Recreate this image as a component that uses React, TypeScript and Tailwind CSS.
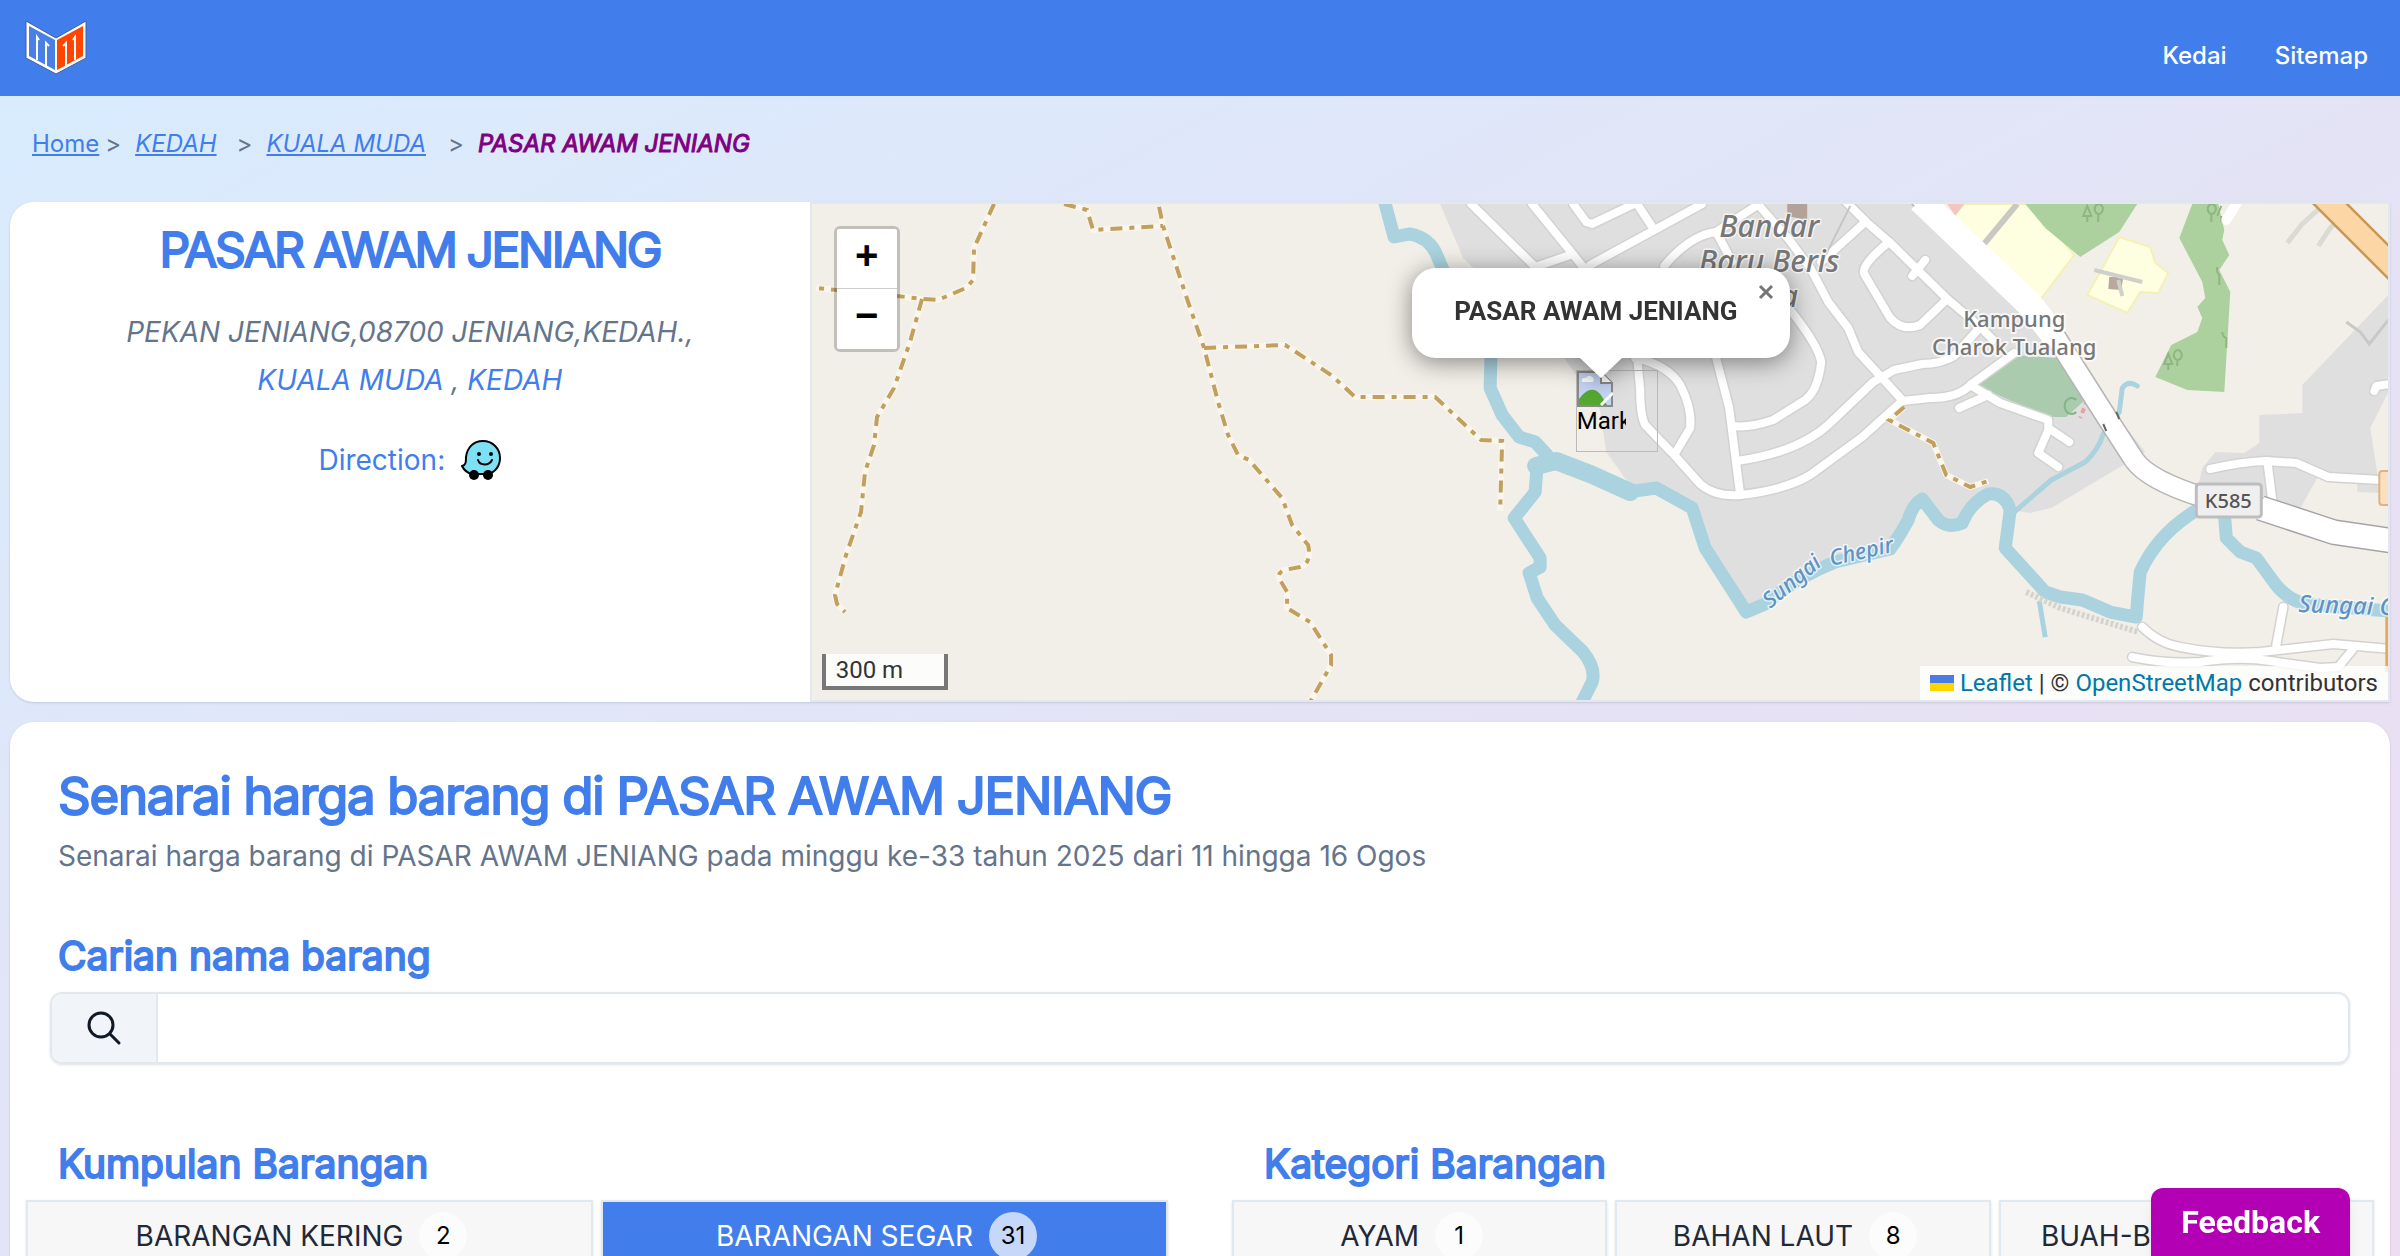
import { useState } from 'react';

const trails = [
  'M994 204 974 248 973 280 966 288 938 300 922 299 897 296 816 288',
  'M922 299 910 342 894 388 877 417 874 445 865 472 861 512 846 555 835 595 837 604 845 612',
  'M1064 204 1087 210 1093 230 1163 226',
  'M1159 207 1163 226 1188 302 1204 348 1218 402 1228 435 1238 455 1249 460 1282 498 1292 525 1308 545Q1312 563 1300 567L1284 570Q1276 574 1280 580L1287 592 1287 608 1310 622 1331 655 1331 665 1310 702',
  'M1204 348 1285 345 1331 375 1355 397 1435 397 1481 440 1502 441 1500 511',
  'M1904 407 1889 420 1933 443 1946 475 1970 487 1988 481',
];

const streets = [
  'M1471 204 1535 267 1570 255',
  'M1532 204 1583 267',
  'M1573 204 1586 222 1592 224 1634 204',
  'M1637 204 1654 230',
  'M1702 204 1590 265',
  'M1664 266Q1690 235 1716 232L1756 206',
  'M1760 207 1789 240 1810 268 1828 302 1848 328 1858 352 1902 400',
  'M1716 232 1732 262',
  'M1844 200 1866 222 1889 242 1946 298 1980 327 1993 340',
  'M1865 222 1821 262',
  'M1889 242Q1860 265 1864 274L1890 318Q1902 332 1920 325L1946 300',
  'M1912 276 1925 260',
  'M1980 327 1954 356Q1940 364 1922 364L1894 370 1873 382 1831 422Q1800 452 1737 461',
  'M2014 353 1970 385Q1958 398 1930 398L1902 401 1862 437 1810 475Q1785 490 1740 495 1715 497 1700 484L1674 455 1645 425Q1640 415 1640 390L1637 358',
  'M1635 358Q1668 365 1680 385 1692 408 1690 428L1674 455',
  'M1716 358 1729 408 1740 495',
  'M1790 310Q1818 345 1821 362 1818 390 1805 400L1773 420Q1750 428 1732 426',
  'M1970 385 2000 403 2048 420 2048 430 2038 453 2058 467',
  'M1988 395 1959 408',
  'M2051 430 2069 442',
  'M2210 469Q2240 462 2265 461L2296 463 2328 477 2380 480',
  'M2267 461 2273 508',
  'M2390 384 2376 386 2374 391',
  'M2142 627Q2158 643 2180 647 2220 655 2260 652L2333 644 2390 649',
  'M2283 607 2276 645',
  'M2132 657Q2165 664 2200 662 2240 656 2270 661L2320 668 2338 667 2352 650',
];

const rivers = [
  'M1384 200 1394 237 1410 234Q1430 238 1437 256L1460 310 1491 350 1490 388 1502 415 1519 437 1535 442 1547 455 1540 465',
  'M1537 465 1535 492 1514 518 1540 558 1540 567 1529 573 1537 598 1555 625 1583 652Q1596 668 1592 682L1581 704',
  'M1627 492 1656 488 1692 508 1705 548 1746 612 1765 604Q1795 578 1835 562L1890 549Q1900 535 1908 520 1912 505 1922 499L1938 520Q1948 529 1962 523 1970 503 1988 494 2004 492 2010 510L2005 548 2045 592 2060 597 2082 600 2110 612 2136 617Q2138 590 2140 572 2158 532 2200 508',
  'M2224 512 2226 538 2240 552 2256 558 2275 584Q2288 600 2305 604L2400 612',
];

const mainRoad = 'M1912 190 2030 305 2056 338 2103 412 2134 460Q2148 480 2202 497L2260 508 2333 532 2400 542';

function MapTiles() {
  return (
    <svg
      className="absolute inset-0 h-full w-full"
      viewBox="812 204 1576 496"
      preserveAspectRatio="xMidYMid slice"
      aria-hidden="true"
    >
      <rect x="800" y="190" width="1600" height="520" fill="#f2efe9" />

      {/* residential areas */}
      <g fill="#dfdfdf">
        <path d="M1440 204 1463 258 1560 352 1600 410 1606 452 1632 488 1656 488 1692 508 1705 548 1746 612 1835 562 1899 548 1922 500 1949 525 1988 495 2010 510 2030 513 2051 508 2145 452 2030 305 1920 204Z" />
        <path d="M2388 295 2302 385 2302 413 2259 415 2259 443 2244 453 2215 452 2202 468 2198 485 2299 510 2317 478 2357 480 2357 492 2380 493 2370 428 2388 392Z" />
      </g>

      {/* schools, parks and woods */}
      <g fill="#fefee0" stroke="#f5f0b8" strokeWidth="2">
        <path d="M1964 204 2030 204 2074 255 2040 300 1980 242 1949 220Z" />
        <path d="M2119 237 2150 247 2155 263 2168 273 2158 293 2140 292 2127 313 2087 295 2100 272Z" />
      </g>
      <path d="M1947 204 1964 204 1955 216Z" fill="#f5c5bf" />
      <path d="M2017 204 1983 245" stroke="#c9c9c3" strokeWidth="6" />
      <g fill="#add19e">
        <path d="M2025 204 2137 204 2119 232 2080 257 2045 228Z" />
        <path d="M2192 204 2218 204 2224 230 2222 240 2229 255 2219 270 2230 292 2224 392 2187 390 2155 377 2171 345 2197 332 2202 318 2197 307 2205 298 2202 282 2179 238Z" />
      </g>
      <path d="M2011 355 2056 358 2087 398 2066 417 2048 417 1975 385Z" fill="#aacbae" />
      <g fill="none" stroke="#8fb580" strokeWidth="2">
        <path d="M2087 222v-6M2083 216l4-10 4 10zM2098 222v-8a4 5 0 1 1 1 0" />
        <path d="M2211 222v-8a4 5 0 1 1 1 0M2221 222v-6M2217 216l4-10" />
        <path d="M2168 370v-6M2164 364l4-10 4 10zM2177 366v-6a4 5 0 1 1 1 0" />
        <path d="M2226 348v-10a5 7 0 0 1-4-6M2219 285v-10a5 7 0 0 1-2-8" />
        <path d="M2076 400a7 8 0 1 0 0 12" stroke="#85b388" />
      </g>
      <path d="M1787 204h20v16l-20-4z" fill="#b3a297" />
      <path d="M2109 277h14l-2 13-13-1z" fill="#b9a99c" />
      <path d="M2094 270 2142 282M2118 280 2122 296" stroke="#cfcfcb" strokeWidth="4" />
      <path d="M2287 243 2302 224 2322 206M2318 246 2330 228 2348 212" fill="none" stroke="#dcdad5" strokeWidth="5" />
      <path d="M2346 322 2360 332 2369 344 2388 320" fill="none" stroke="#c9c9c9" strokeWidth="3" />
      <path d="M2236 204 2226 220" stroke="#fff" strokeWidth="10" strokeLinecap="round" />

      <g fill="none" stroke="#aad3df" strokeLinejoin="round">
        {rivers.map((d) => (
          <path key={d} d={d} strokeWidth="13" />
        ))}
        <path d="M1536 466 1556 461 1590 474 1630 492" strokeWidth="18" strokeLinecap="round" />
        <path d="M2137 386Q2128 380 2122 388L2119 412 2103 434Q2098 450 2085 462L2051 480 2014 512" strokeWidth="5" strokeLinecap="round" />
        <path d="M2039 601 2045 637" strokeWidth="5" />
      </g>

      <g fill="none" strokeLinecap="round" strokeLinejoin="round">
        {streets.map((d) => (
          <path key={d} d={d} stroke="#d2d2d0" strokeWidth="11" />
        ))}
        {streets.map((d) => (
          <path key={d} d={d} stroke="#fff" strokeWidth="8" />
        ))}
      </g>
      <path d="M1842 222 1822 262M1842 222 1850 206" stroke="#c6c6c6" strokeWidth="2" />
      <path d="M2026 592 2060 608 2138 632" fill="none" stroke="#d6d3cd" strokeWidth="6" strokeDasharray="3 2" />
      <path d="M2087 400 2080 418" stroke="#eaa09b" strokeWidth="4" strokeDasharray="5 4" />

      {/* main roads */}
      <g fill="none" strokeLinejoin="round">
        <path d={mainRoad} stroke="#b5b5b5" strokeWidth="22" />
        <path d="M2260 508 2333 532 2400 542" stroke="#a5a5a5" strokeWidth="26" />
        <path d="M1920 200 2030 305 2056 338" stroke="#fff" strokeWidth="26" />
        <path d={mainRoad} stroke="#fff" strokeWidth="19" />
        <path d="M2260 508 2333 532 2400 542" stroke="#fff" strokeWidth="23" />
        <path d="M2310 184 2400 274" stroke="#c9974f" strokeWidth="26" />
        <path d="M2310 184 2400 274" stroke="#fcd6a4" strokeWidth="21" />
        <path d="M2387 612V672" stroke="#e8a852" strokeWidth="4" />
      </g>
      <path d="M2116 412 2119 419M2103 424 2106 431" stroke="#666" strokeWidth="2" />

      <g fill="none">
        {trails.map((d) => (
          <path key={d} d={d} stroke="#faf6ee" strokeWidth="6" />
        ))}
        {trails.map((d) => (
          <path key={d} d={d} stroke="#c0a05c" strokeWidth="4" strokeDasharray="12 7 5 7" />
        ))}
      </g>

      <rect x="2379" y="471" width="20" height="34" rx="3" fill="#fbe0c0" stroke="#dfb183" strokeWidth="2" />
      <rect x="2196" y="484" width="65" height="33" rx="3" fill="#efefef" stroke="#bdbdbd" strokeWidth="3" />
      <g className="font-['Noto_Sans',sans-serif]" textAnchor="middle" paintOrder="stroke" stroke="#ffffff" strokeOpacity="0.7" strokeLinejoin="round">
        <text x="2228" y="508" fontSize="20" fontWeight="500" fill="#555" stroke="none">K585</text>
        <g fontSize="30" fontStyle="italic" fontWeight="500" fill="#777" strokeWidth="3">
          <text x="1769" y="237">Bandar</text>
          <text x="1769" y="272">Baru Beris</text>
          <text x="1769" y="307">Jaya</text>
        </g>
        <g fontSize="22" fontWeight="500" fill="#777" strokeWidth="4">
          <text x="2014" y="327">Kampung</text>
          <text x="2014" y="355">Charok Tualang</text>
        </g>
        <g fontSize="22" fontStyle="italic" fontWeight="500" fill="#5f93c4" strokeWidth="3" textAnchor="start">
          <text transform="translate(1770 609) rotate(-40)">Sungai</text>
          <text transform="translate(1831 566) rotate(-13)">Chepir</text>
          <text transform="translate(2298 612) rotate(2)" fontSize="24">Sungai C</text>
        </g>
      </g>
    </svg>
  );
}

function Logo() {
  return (
    <svg className="h-14 w-16" viewBox="0 0 64 56" aria-hidden="true">
      <path d="M2 1 32 18 62 1V38L32 54 2 38Z" fill="#fff" stroke="#3f5f9f" strokeWidth="1" />
      <path d="M5 6 31 20V50L5 36Z" fill="#4a80e6" />
      <path d="M59 6 33 20V50L59 36Z" fill="#ff4500" />
      <path d="M13 40V17L15 20M22 46V23L25 26" fill="none" stroke="#fff" strokeWidth="2" />
      <path d="M51 40V17L49 20M42 46V23L39 26" fill="none" stroke="#fff" strokeWidth="2" />
    </svg>
  );
}

function WazeIcon() {
  return (
    <svg className="h-10 w-10" viewBox="0 0 40 40" aria-hidden="true">
      <path
        d="M22 1C12 1 6 8 5 17C5 22 5 25 1 26C3 30 6 33 11 34H26C34 33 39 26 39 18C39 8 31 1 22 1Z"
        fill="#7ee0f5"
        stroke="#000"
        strokeWidth="2"
        strokeLinejoin="round"
      />
      <circle cx="13" cy="35" r="5" />
      <circle cx="27" cy="35" r="5" />
      <circle cx="18" cy="14" r="2" />
      <circle cx="30" cy="14" r="2" />
      <path d="M17 20C19 26 28 26 31 20" fill="none" stroke="#000" strokeWidth="2" strokeLinecap="round" />
    </svg>
  );
}

function SearchIcon() {
  return (
    <svg className="h-9 w-9" viewBox="0 0 36 36" fill="none" stroke="#111827" strokeWidth="3" strokeLinecap="round" aria-hidden="true">
      <circle cx="15" cy="15" r="12" />
      <path d="M24 24 33 33" />
    </svg>
  );
}

function StoreMap() {
  return (
    <div className="relative flex-1 overflow-hidden border-2 border-[#e2e8f0] font-[Roboto,sans-serif]">
      <MapTiles />

      <div className="absolute top-5.5 left-5.5 flex w-[66px] flex-col rounded-md border-3 border-black/20 bg-clip-padding font-['Liberation_Mono',monospace] text-[40px] font-bold text-black">
        <button type="button" aria-label="Zoom in" className="h-15 rounded-t-xs border-b border-[#ccc] bg-white">+</button>
        <button type="button" aria-label="Zoom out" className="h-15 rounded-b-xs bg-white">−</button>
      </div>

      <div className="absolute top-[166px] left-1/2 -ml-6 h-[82px] w-[82px] border border-[#bababa]">
        <svg className="block h-9 w-9" viewBox="0 0 36 36" aria-hidden="true">
          <path d="M1 1H24L35 12V35H1Z" fill="#c6d5f5" stroke="#8a8a8a" strokeWidth="2" />
          <path d="M5 11a3 3 0 0 1 4-4 4 4 0 0 1 7 4z" fill="#fff" />
          <path d="M2 34V28Q14 12 24 24L30 34Z" fill="#55a832" />
          <path d="M24 1V12H35" fill="#fff" stroke="#8a8a8a" strokeWidth="2" />
          <path d="M36 22 24 34" stroke="#fff" strokeWidth="3" />
        </svg>
        <span className="block w-[49px] overflow-hidden text-2xl leading-7 text-black">Marker</span>
      </div>

      <div className="absolute top-16 left-1/2 -ml-[188px] w-[378px] drop-shadow-[0_4px_12px_rgba(0,0,0,0.45)]">
        <div className="rounded-3xl bg-white pt-6.5 pr-2.5 pb-7.5 text-center text-[26px] leading-[34px] font-bold text-[#333]">
          PASAR AWAM JENIANG
        </div>
        <svg className="mx-auto block h-5 w-11" viewBox="0 0 44 20" aria-hidden="true">
          <path d="M1 0H43L22 20Z" fill="#fff" />
        </svg>
        <button type="button" aria-label="Close popup" className="absolute top-0 right-0 flex h-12 w-12 items-center justify-center">
          <svg className="h-4 w-4" viewBox="0 0 16 16" stroke="#757575" strokeWidth="3" aria-hidden="true">
            <path d="M2 2 14 14M14 2 2 14" />
          </svg>
        </button>
      </div>

      <div className="absolute bottom-2.5 left-2.5 h-9 w-[126px] border-4 border-t-0 border-[#777] bg-white/80 px-2.5 text-2xl leading-8 text-[#333]">
        300 m
      </div>

      <div className="absolute right-0 bottom-0 flex items-center gap-1.5 bg-white/80 px-2.5 text-2xl leading-[34px] text-[#333]">
        <svg className="h-4 w-6" viewBox="0 0 24 16" aria-hidden="true">
          <path d="M0 0H24V8H0Z" fill="#4c7be1" />
          <path d="M0 8H24V16H0Z" fill="#ffd500" />
        </svg>
        <span>
          <a href="#leaflet" className="text-[#0078a8]">Leaflet</a> | © <a href="#osm" className="text-[#0078a8]">OpenStreetMap</a> contributors
        </span>
      </div>
    </div>
  );
}

function FilterButton({ label, count, active, onClick }: { label: string; count: number; active: boolean; onClick: () => void }) {
  return (
    <button
      type="button"
      onClick={onClick}
      className={`flex h-18 items-center justify-center gap-4 border-2 border-[#e2e8f0] pr-4 text-[28px] shadow-sm ${
        active ? 'bg-[#417eeb] text-white' : 'bg-[#f7f7f7] text-[#1f2937]'
      }`}
    >
      <span className="whitespace-nowrap">{label}</span>
      <span className={`flex h-12 w-12 shrink-0 items-center justify-center rounded-full text-2xl text-black ${active ? 'bg-[#c6d8f9]' : 'bg-[#fcfcfc]'}`}>
        {count}
      </span>
    </button>
  );
}

const groups = [
  { label: 'BARANGAN KERING', count: 2 },
  { label: 'BARANGAN SEGAR', count: 31 },
];

const categories = [
  { label: 'AYAM', count: 1 },
  { label: 'BAHAN LAUT', count: 8 },
  { label: 'BUAH-BUAHAN', count: 4 },
];

const subheading = 'text-[39px] leading-12 font-normal text-[#417eeb] [-webkit-text-stroke:2px_#417eeb]';

export default function App() {
  const [group, setGroup] = useState('BARANGAN SEGAR');
  const [category, setCategory] = useState('');
  const [search, setSearch] = useState('');

  return (
    <div className="h-screen overflow-hidden bg-linear-to-br from-[#d7ecfe] to-[#eedcf0] font-[Inter,sans-serif] text-[#64748b]">
      <header className="flex h-24 items-center justify-between bg-[#417eeb] px-6">
        <a href="#home" aria-label="Home">
          <Logo />
        </a>
        <nav className="flex gap-12 px-2 pt-4 text-2xl font-medium text-white">
          <a href="#kedai">Kedai</a>
          <a href="#sitemap">Sitemap</a>
        </nav>
      </header>

      <nav aria-label="Breadcrumb" className="flex h-[106px] items-start px-8 pt-[30px] text-2xl leading-9">
        <a href="#home" className="text-[#417eeb] underline">Home</a>
        <span className="pr-3.5 pl-1.5">&gt;</span>
        <a href="#kedah" className="text-[#417eeb] italic underline">KEDAH</a>
        <span className="pr-3.5 pl-5">&gt;</span>
        <a href="#kuala-muda" className="text-[#417eeb] italic underline">KUALA MUDA</a>
        <span className="pr-3.5 pl-5.5">&gt;</span>
        <span className="text-[#800080] italic [-webkit-text-stroke:1px_#800080]">PASAR AWAM JENIANG</span>
      </nav>

      <main className="px-2.5">
        <section className="flex h-[500px] overflow-hidden rounded-l-3xl bg-white shadow-sm">
          <div className="w-[33.6%] pt-5 text-center text-[28px] leading-12">
            <h1 className="text-5xl leading-14 font-normal tracking-tighter text-[#417eeb] [-webkit-text-stroke:2px_#417eeb]">
              PASAR AWAM JENIANG
            </h1>
            <address className="mt-7.5">
              PEKAN JENIANG,08700 JENIANG,KEDAH.,
              <br />
              <a href="#kuala-muda" className="text-[#417eeb]">KUALA MUDA</a> , <a href="#kedah" className="text-[#417eeb]">KEDAH</a>
            </address>
            <a href="#waze" className="mt-8 flex items-center justify-center gap-4 text-[#417eeb]">
              Direction: <WazeIcon />
            </a>
          </div>
          <StoreMap />
        </section>

        <section className="mt-5 rounded-3xl bg-white px-4 pt-11 pb-10 shadow-sm">
          <div className="px-8">
            <h2 className="text-[51px] leading-15 font-normal tracking-tight text-[#417eeb] [-webkit-text-stroke:2px_#417eeb]">
              Senarai harga barang di PASAR AWAM JENIANG
            </h2>
            <p className="mt-2.5 text-[28px] leading-10">
              Senarai harga barang di PASAR AWAM JENIANG pada minggu ke-33 tahun 2025 dari 11 hingga 16 Ogos
            </p>
            <label htmlFor="search" className={`mt-14 block ${subheading}`}>
              Carian nama barang
            </label>
          </div>

          <div className="mx-6 mt-3 flex h-18 overflow-hidden rounded-xl border-2 border-[#e2e8f0] shadow-sm">
            <div className="flex w-[106px] items-center justify-center border-r-2 border-[#e2e8f0] bg-[#f1f5f9]">
              <SearchIcon />
            </div>
            <input
              id="search"
              type="text"
              value={search}
              onChange={(e) => setSearch(e.target.value)}
              className="min-w-0 flex-1 px-4 text-2xl text-[#1f2937] outline-none"
            />
          </div>

          <div className="mt-19 grid grid-cols-2 gap-16">
            <div>
              <h3 className={`px-8 ${subheading}`}>Kumpulan Barangan</h3>
              <div className="mt-3 grid grid-cols-2 gap-2">
                {groups.map((g) => (
                  <FilterButton key={g.label} label={g.label} count={g.count} active={group === g.label} onClick={() => setGroup(g.label)} />
                ))}
              </div>
            </div>
            <div>
              <h3 className={`px-8 ${subheading}`}>Kategori Barangan</h3>
              <div className="mt-3 grid grid-cols-3 gap-2">
                {categories.map((c) => (
                  <FilterButton key={c.label} label={c.label} count={c.count} active={category === c.label} onClick={() => setCategory(c.label)} />
                ))}
              </div>
            </div>
          </div>
        </section>
      </main>

      <button
        type="button"
        className="fixed right-[50px] bottom-0 h-17 rounded-t-xl bg-[#b400b4] px-[30px] font-[Roboto,sans-serif] text-[32px] font-bold text-white shadow-lg"
      >
        Feedback
      </button>
    </div>
  );
}
